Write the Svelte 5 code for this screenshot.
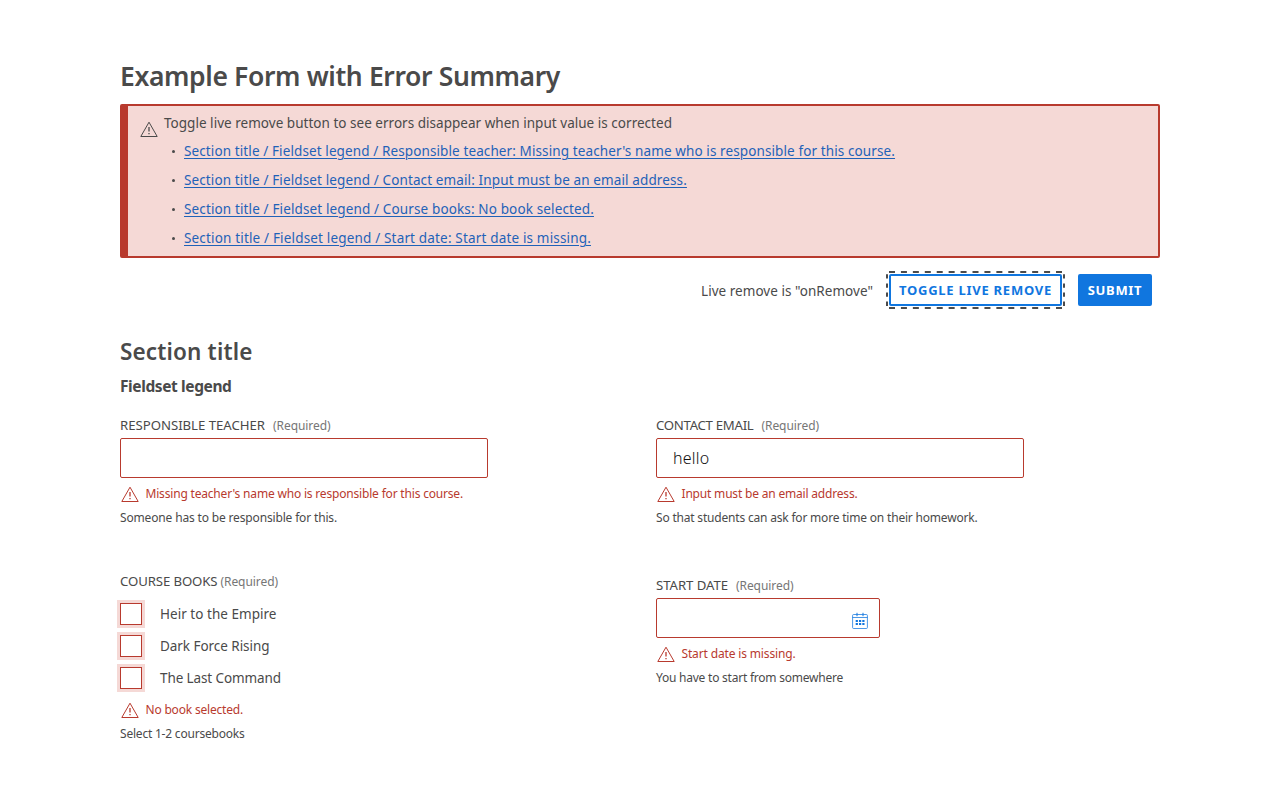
<script>
  const errors = [
    ["Section title / Fieldset legend / Responsible teacher: Missing teacher's name who is responsible for this course.", 0.108],
    ['Section title / Fieldset legend / Contact email: Input must be an email address.', 0.123],
    ['Section title / Fieldset legend / Course books: No book selected.', 0.133],
    ['Section title / Fieldset legend / Start date: Start date is missing.', 0.168],
  ];
  const books = [['Heir to the Empire', 0.032], ['Dark Force Rising', -0.047], ['The Last Command', -0.103]];
</script>

{#snippet t(text, tracking)}<span style:letter-spacing="{tracking}px">{text}</span>{/snippet}

{#snippet warning()}
  <svg class="warning" viewBox="0 0 18 16" width="18" height="16" fill="none" stroke="currentColor">
    <path d="M9 1.2 17.2 15.5H.8Z" stroke-linejoin="round" />
    <path d="M9 6v4.6M9 12v1.3" stroke-width="1.3" />
  </svg>
{/snippet}

{#snippet label(text, tracking)}
  <div class="label">{@render t(text, tracking)}<small>{@render t('(Required)', -0.07)}</small></div>
{/snippet}

{#snippet messages(error, errorTracking, help, helpTracking)}
  <p class="error">{@render warning()}{@render t(error, errorTracking)}</p>
  <p class="help">{@render t(help, helpTracking)}</p>
{/snippet}

<main>
  <h1>{@render t('Example Form with Error Summary', -0.369)}</h1>
  <section class="summary">
    {@render warning()}
    <div>
      <p>{@render t('Toggle live remove button to see errors disappear when input value is corrected', 0.026)}</p>
      <ul>
        {#each errors as [text, tracking]}
          <li><a href="#field">{@render t(text, tracking)}</a></li>
        {/each}
      </ul>
    </div>
  </section>
  <div class="actions">
    <div class="status">{@render t('Live remove is "onRemove"', 0.039)}</div>
    <button class="toggle">
      <svg class="focus" width="179" height="38" fill="none" stroke="#4a4a4a" stroke-width="2">
        <path d="M3 1h173M3 37h173" stroke-dasharray="6 5.93" />
        <path d="M1 3.3v32M178 3.3v32" stroke-dasharray="4.3 4.8" />
      </svg>
      {@render t('TOGGLE LIVE REMOVE', 0.74)}
    </button>
    <button class="submit">{@render t('SUBMIT', 0.674)}</button>
  </div>

  <h2>{@render t('Section title', 0.147)}</h2>
  <h3>{@render t('Fieldset legend', -0.394)}</h3>
  <div class="grid">
    <div class="field">
      {@render label('RESPONSIBLE TEACHER', -0.026)}
      <div class="input"></div>
      {@render messages("Missing teacher's name who is responsible for this course.", -0.184, 'Someone has to be responsible for this.', -0.158)}
    </div>
    <div class="field">
      {@render label('CONTACT EMAIL', -0.282)}
      <div class="input">{@render t('hello', 0.247)}</div>
      {@render messages('Input must be an email address.', -0.188, 'So that students can ask for more time on their homework.', -0.192)}
    </div>
    <div class="field books">
      {@render label('COURSE BOOKS', -0.108)}
      <div class="options">
        {#each books as [name, tracking]}
          <div class="option"><i></i>{@render t(name, tracking)}</div>
        {/each}
      </div>
      {@render messages('No book selected.', -0.192, 'Select 1-2 coursebooks', -0.21)}
    </div>
    <div class="field start">
      {@render label('START DATE', -0.058)}
      <div class="input date">
        <svg viewBox="0 0 16 18" width="16" height="18" fill="none" stroke="#1076df">
          <rect x=".6" y="2.5" width="14.8" height="14" rx="1" stroke-opacity=".75" />
          <path d="M.5 5.5h15" stroke-opacity=".75" />
          <path d="M5 .8v3.4M11 .8v3.4" />
          <path d="M3.7 9h8.8M3.7 12h8.8" stroke-width="2" stroke-dasharray="2.2 1.1" />
        </svg>
      </div>
      {@render messages('Start date is missing.', -0.149, 'You have to start from somewhere', -0.23)}
    </div>
  </div>
</main>

<style>
  :global(body) { background: #fff; }
  main { box-sizing: border-box; width: 1040px; margin: 0 auto; padding-top: 59px; color: #4a4a4a; font: 13.5px/20px 'Noto Sans', sans-serif; white-space: nowrap; }
  h1, h2, h3, p, ul { margin: 0; padding: 0; }
  h1 { font-size: 26.5px; font-weight: 600; line-height: 34px; }
  .summary { box-sizing: border-box; height: 154px; margin-top: 11px; padding: 7px 0 0 11px; display: flex; gap: 7px; border: 2px solid #b83a2e; border-left-width: 8px; border-radius: 2px; background: #f5d9d6; }
  .warning { flex: none; display: block; }
  .summary > .warning { margin: 8px -0.5px 0 0.5px; }
  ul { list-style: none; padding-top: 3px; }
  li { display: flex; align-items: center; height: 29px; padding-left: 8px; box-sizing: border-box; }
  li::before { content: ''; width: 3px; height: 3px; border-radius: 50%; background: #4a4a4a; margin: 1px 9px 0 0; }
  a { color: #1f62b8; text-decoration: underline; text-underline-offset: 2px; text-decoration-thickness: 1px; }
  .actions { display: flex; justify-content: flex-end; align-items: center; padding: 16px 8px 0 0; height: 32px; }
  .status { padding-top: 2px; }
  button { box-sizing: border-box; height: 32px; border-radius: 2px; padding: 0; border: 2px solid #1076df; font: 700 13px/20px 'Noto Sans', sans-serif; position: relative; display: flex; align-items: center; justify-content: center; outline: none; }
  .toggle { width: 173px; margin: 0 16px; color: #1076df; background: #fff; }
  .submit { width: 74px; color: #fff; background: #1076df; }
  .focus { position: absolute; left: -5px; top: -5px; }
  h2 { font-size: 22.5px; font-weight: 600; line-height: 32px; margin-top: 30px; }
  h3 { font-size: 15.5px; font-weight: 700; line-height: 24px; margin-top: 6px; }
  .grid { display: grid; grid-template-columns: 368px 368px; column-gap: 168px; margin-top: 17px; grid-template-rows: 156px auto; }
  .label { display: flex; gap: 8px; height: 20px; line-height: 20px; font-size: 13.2px; }
  small { font-size: 12px; line-height: 22px; color: #767676; }
  .input { box-sizing: border-box; height: 40px; margin-top: 3px; border: 1px solid #b83a2e; border-radius: 2px; padding: 0 16px; font-size: 16px; line-height: 38px; color: #111; font-weight: 300; }
  .date { width: 224px; display: flex; justify-content: flex-end; padding: 13px 11px 0 0; }
  .error { display: flex; align-items: center; gap: 6.5px; height: 16px; margin: 8px 0 0 1px; color: #b83a2e; font-size: 12px; line-height: 16px; }
  .help { font-size: 12px; line-height: 16px; margin-top: 8px; }
  .start { padding-top: 4px; }
  .books .label { gap: 3px; }
  .options { padding-top: 7px; }
  .option { display: flex; align-items: center; gap: 18px; height: 32px; }
  .option i { box-sizing: border-box; width: 22px; height: 22px; border: 1px solid #b83a2e; box-shadow: 0 0 0 3px #f5d9d6; }
</style>
